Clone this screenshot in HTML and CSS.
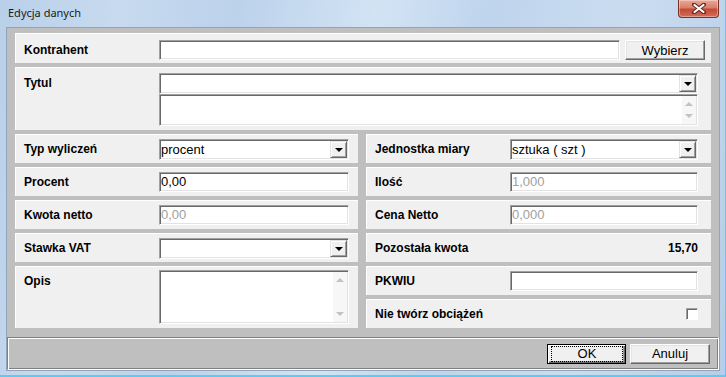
FILE: index.html
```html
<!DOCTYPE html>
<html lang="pl">
<head>
    <meta charset="UTF-8">
    <title>Edycja danych</title>
    <link rel="stylesheet" href="styles.css">
</head>
<body>
    <div class="window">
        <div class="titlebar">
            <span class="title">Edycja danych</span>
            <div class="close-btn">
                <svg width="14" height="11" viewBox="0 0 14 11">
                    <path d="M2 1.5 L12 9.5 M12 1.5 L2 9.5" stroke="#5b2720" stroke-width="4" stroke-linecap="round"/>
                    <path d="M2.5 2 L11.5 9 M11.5 2 L2.5 9" stroke="#fff" stroke-width="2.2" stroke-linecap="round"/>
                </svg>
            </div>
        </div>

        <div class="client">
            <div class="panel panel-kontrahent">
                <div class="lbl">Kontrahent</div>
                <div class="edit edit-kontrahent"></div>
                <button class="btn btn-wybierz">Wybierz</button>
            </div>

            <div class="panel panel-tytul">
                <div class="lbl">Tytul</div>
                <div class="stack">
                    <div class="edit combo combo-wide">
                        <span class="combo-text"></span>
                        <span class="drop"><i class="arrow"></i></span>
                    </div>
                    <div class="edit memo memo-tytul">
                        <span class="scroll"><i class="up"></i><i class="down"></i></span>
                    </div>
                </div>
            </div>

            <div class="columns">
                <div class="col col-left">
                    <div class="panel">
                        <div class="lbl">Typ wyliczeń</div>
                        <div class="edit combo field">
                            <span class="combo-text">procent</span>
                            <span class="drop"><i class="arrow"></i></span>
                        </div>
                    </div>
                    <div class="panel">
                        <div class="lbl">Procent</div>
                        <div class="edit field">0,00</div>
                    </div>
                    <div class="panel">
                        <div class="lbl">Kwota netto</div>
                        <div class="edit field disabled">0,00</div>
                    </div>
                    <div class="panel">
                        <div class="lbl">Stawka VAT</div>
                        <div class="edit combo field">
                            <span class="combo-text"></span>
                            <span class="drop"><i class="arrow"></i></span>
                        </div>
                    </div>
                    <div class="panel tall">
                        <div class="lbl lbl-top">Opis</div>
                        <div class="edit memo field memo-opis">
                            <span class="scroll"><i class="up"></i><i class="down"></i></span>
                        </div>
                    </div>
                </div>

                <div class="col col-right">
                    <div class="panel">
                        <div class="lbl">Jednostka miary</div>
                        <div class="edit combo field">
                            <span class="combo-text">sztuka ( szt )</span>
                            <span class="drop"><i class="arrow"></i></span>
                        </div>
                    </div>
                    <div class="panel">
                        <div class="lbl">Ilość</div>
                        <div class="edit field disabled">1,000</div>
                    </div>
                    <div class="panel">
                        <div class="lbl">Cena Netto</div>
                        <div class="edit field disabled">0,000</div>
                    </div>
                    <div class="panel">
                        <div class="lbl">Pozostała kwota</div>
                        <div class="value">15,70</div>
                    </div>
                    <div class="panel">
                        <div class="lbl">PKWIU</div>
                        <div class="edit field"></div>
                    </div>
                    <div class="panel">
                        <div class="lbl lbl-wide">Nie twórz obciążeń</div>
                        <div class="check"></div>
                    </div>
                </div>
            </div>

            <div class="footer">
                <button class="btn btn-ok"><span class="focus">OK</span></button>
                <button class="btn btn-cancel">Anuluj</button>
            </div>
        </div>
    </div>
</body>
</html>
```

FILE: styles.css
```css
body {
    margin: 0;
    font-family: "Liberation Sans", Arial, sans-serif;
    font-size: 12px;
    color: #000;
}

.window {
    width: 726px;
    height: 377px;
    box-sizing: border-box;
    padding: 0 7px 7px 7px;
    display: flex;
    flex-direction: column;
    background: linear-gradient(100deg, #b9d0e9 0%, #c7daef 15%, #bcd2eb 30%, #d2e3f4 48%, #bfd5ed 62%, #cadcf0 80%, #b7cee8 100%);
    box-shadow: inset -1px -2px 0 #5ccbef;
}

/* title bar */
.titlebar {
    height: 28px;
    flex-shrink: 0;
    display: flex;
    align-items: flex-start;
}
.title {
    font-family: "Noto Sans", sans-serif;
    font-size: 11px;
    line-height: 15px;
    padding: 5px 0 0 1px;
    color: #1a1a1a;
}
.close-btn {
    margin-left: auto;
    width: 41px;
    height: 18px;
    box-sizing: border-box;
    border: 1px solid #7b3128;
    border-top: none;
    border-radius: 0 0 4px 4px;
    background: linear-gradient(#eaa898, #d98069 45%, #c44a36 55%, #d36e58);
    box-shadow: inset 0 0 0 1px rgba(255,255,255,0.35);
    display: flex;
    align-items: center;
    justify-content: center;
}

/* client area */
.client {
    flex: 1;
    background: #bfbfbf;
    box-shadow: 0 0 0 1px #90a4ba;
    display: flex;
    flex-direction: column;
    padding-top: 5px;
}
.panel {
    background: #f0f0f0;
    box-sizing: border-box;
    border-top: 1px solid #fff;
    border-left: 1px solid #fff;
    display: flex;
}
.client > .panel {
    margin: 0 8px;
    align-items: flex-start;
    padding-left: 8px;
}
.panel-kontrahent {
    height: 30px;
    padding-top: 6px;
}
.panel-tytul {
    height: 63px;
    margin-top: 4px !important;
    padding-top: 5px;
}
.lbl {
    width: 135px;
    flex-shrink: 0;
    font-weight: bold;
    font-size: 12px;
    line-height: 20px;
}
.lbl-top {
    line-height: 14px;
    margin-top: 4px;
}
.lbl-wide {
    width: auto;
}

/* edit boxes */
.edit {
    box-sizing: border-box;
    height: 20px;
    background: #fff;
    border: 1px solid;
    border-color: #a0a0a0 #fff #fff #a0a0a0;
    box-shadow: inset 1px 1px #696969, inset -1px -1px #e3e3e3;
    font-size: 13px;
    line-height: 18px;
    padding: 0 1px;
    white-space: nowrap;
}
.edit.disabled {
    color: #a0a0a0;
}
.edit-kontrahent {
    width: 461px;
}
.btn-wybierz {
    width: 80px;
    margin-left: 5px;
}

.combo {
    height: 21px;
    display: flex;
    padding: 0;
}
.combo-text {
    flex: 1;
    padding-left: 1px;
    line-height: 19px;
}
.drop {
    width: 17px;
    height: 17px;
    margin: 1px 1px 1px 0;
    box-sizing: border-box;
    background: #f0f0f0;
    border: 1px solid;
    border-color: #e3e3e3 #696969 #696969 #e3e3e3;
    box-shadow: inset 1px 1px #fff, inset -1px -1px #a0a0a0;
    display: flex;
    align-items: center;
    justify-content: center;
}
.arrow {
    width: 0;
    height: 0;
    border-left: 4px solid transparent;
    border-right: 4px solid transparent;
    border-top: 4px solid #000;
    margin-top: 1px;
}

.stack {
    display: flex;
    flex-direction: column;
}
.combo-wide,
.memo-tytul {
    width: 539px;
}
.memo {
    display: flex;
    justify-content: flex-end;
    padding: 0;
}
.memo-tytul {
    height: 32px;
}
.memo-opis {
    height: 54px;
}
.scroll {
    width: 14px;
    margin: 1px;
    background: #f7f7f7;
    display: flex;
    flex-direction: column;
    justify-content: space-between;
    align-items: center;
    padding: 6px 0;
    box-sizing: border-box;
}
.up {
    width: 0;
    height: 0;
    border-left: 4px solid transparent;
    border-right: 4px solid transparent;
    border-bottom: 4px solid #c2c2c2;
}
.down {
    width: 0;
    height: 0;
    border-left: 4px solid transparent;
    border-right: 4px solid transparent;
    border-top: 4px solid #c2c2c2;
}

/* two columns */
.columns {
    display: grid;
    grid-template-columns: 343px 345px;
    column-gap: 8px;
    margin: 4px 8px 0;
}
.col {
    display: flex;
    flex-direction: column;
    gap: 4px;
}
.col .panel {
    height: 29px;
    align-items: center;
    padding-left: 8px;
}
.col .panel.tall {
    height: 62px;
    align-items: flex-start;
    padding-top: 3px;
}
.col-left .field {
    width: 190px;
}
.col-right .field {
    width: 188px;
}
.value {
    margin-left: auto;
    margin-right: 13px;
    font-weight: bold;
}
.check {
    width: 12px;
    height: 12px;
    box-sizing: border-box;
    margin-left: auto;
    margin-right: 13px;
    background: #fff;
    border: 1px solid;
    border-color: #a0a0a0 #fff #fff #a0a0a0;
    box-shadow: inset 1px 1px #696969;
}

/* buttons */
.btn {
    box-sizing: border-box;
    height: 20px;
    padding: 0;
    background: #f0f0f0;
    border: 1px solid;
    border-color: #fff #696969 #696969 #fff;
    box-shadow: inset -1px -1px #a0a0a0, inset 1px 1px #e3e3e3;
    font-family: "Liberation Sans", Arial, sans-serif;
    font-size: 13px;
    color: #000;
}
.footer {
    margin-top: auto;
    height: 33px;
    box-sizing: border-box;
    border: 1px solid;
    border-color: #808080 #fff #fff #808080;
    box-shadow: inset 1px 1px #fff, inset -1px -1px #808080;
    display: flex;
    justify-content: flex-end;
    align-items: center;
    gap: 4px;
    padding-right: 8px;
}
.btn-ok {
    width: 79px;
    border-color: #000;
    box-shadow: inset 1px 1px #fff, inset -1px -1px #696969, inset -2px -2px #a0a0a0;
}
.focus {
    display: block;
    margin: 0 2px 0 3px;
    height: 14px;
    line-height: 13px;
    border: 1px dotted #000;
}
.btn-cancel {
    width: 80px;
}
```
